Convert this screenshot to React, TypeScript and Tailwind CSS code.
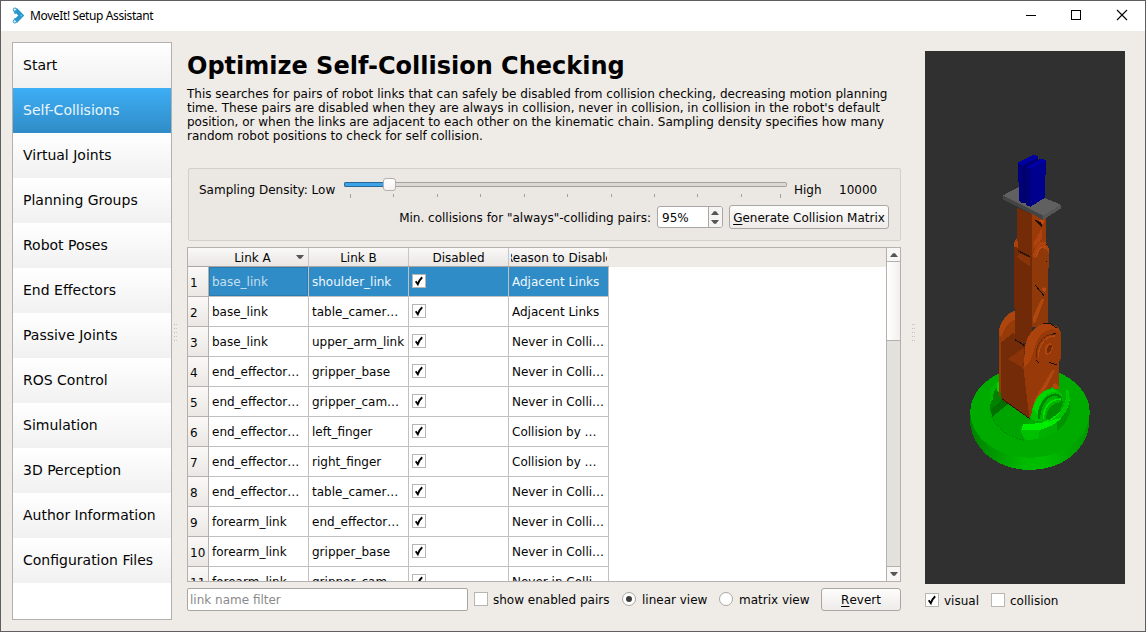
import React from "react";

const steps = [
  "Start",
  "Self-Collisions",
  "Virtual Joints",
  "Planning Groups",
  "Robot Poses",
  "End Effectors",
  "Passive Joints",
  "ROS Control",
  "Simulation",
  "3D Perception",
  "Author Information",
  "Configuration Files",
];

const pairs = [
  ["base_link", "shoulder_link", "Adjacent Links"],
  ["base_link", "table_camer…", "Adjacent Links"],
  ["base_link", "upper_arm_link", "Never in Colli…"],
  ["end_effector…", "gripper_base", "Never in Colli…"],
  ["end_effector…", "gripper_cam…", "Never in Colli…"],
  ["end_effector…", "left_finger", "Collision by …"],
  ["end_effector…", "right_finger", "Collision by …"],
  ["end_effector…", "table_camer…", "Never in Colli…"],
  ["forearm_link", "end_effector…", "Never in Colli…"],
  ["forearm_link", "gripper_base", "Never in Colli…"],
  ["forearm_link", "gripper_cam…", "Never in Colli…"],
];

const ticks = [6, 49, 93, 136, 180, 223, 267, 310, 353, 397, 436];

function Check({ on = false }: { on?: boolean }) {
  return (
    <span className="block h-[14px] w-[14px] shrink-0 border border-[#b9b5b2] bg-white">
      {on && (
        <svg width="12" height="12" viewBox="0 0 12 12" className="block">
          <path d="M2.7 6.3 L4.8 9.2 C5.8 6.4 7 4.2 9.2 2.2" fill="none" stroke="#000" strokeWidth="1.9" />
        </svg>
      )}
    </span>
  );
}

function Radio({ on = false }: { on?: boolean }) {
  return (
    <span className="mb-px flex h-[14px] w-[14px] shrink-0 items-center justify-center rounded-full border border-[#aaa7a4] bg-white">
      {on && <span className="block h-[6px] w-[6px] rounded-full bg-[#3c3c3c]" />}
    </span>
  );
}

function Arrow({ up = false }: { up?: boolean }) {
  return (
    <svg width="8" height="4" viewBox="0 0 8 4" className="block">
      <path d={up ? "M0 4 L3 0.3 H5 L8 4Z" : "M0 0 H8 L5 3.7 H3Z"} fill="#555" />
    </svg>
  );
}

function Splitter() {
  return (
    <svg width="3" height="18" viewBox="0 0 3 18" className="block shrink-0">
      {[0, 4, 8, 12, 16].map((y) => (
        <g key={y}>
          <rect x="0" y={y} width="1" height="1" fill="#bdb9b5" />
          <rect x="2" y={y} width="1" height="1" fill="#cbc7c3" />
        </g>
      ))}
    </svg>
  );
}

function Robot() {
  return (
    <svg width="200" height="533" viewBox="925 51 200 533" className="block" shapeRendering="crispEdges">
      <defs>
        <linearGradient id="rim" x1="0" x2="1" y1="0" y2="0">
          <stop offset="0" stopColor="#008200" />
          <stop offset="0.2" stopColor="#009800" />
          <stop offset="0.45" stopColor="#00ba00" />
          <stop offset="0.62" stopColor="#00be00" />
          <stop offset="1" stopColor="#009800" />
        </linearGradient>
      </defs>
      <g transform="translate(960 310) scale(0.33333)">
        <path d="M31 298 V345 C42 425 118 480 210 480 C302 480 378 425 388 345 V298Z" fill="url(#rim)" />
        <ellipse cx="210" cy="307" rx="179" ry="136" fill="#00ab00" />
        <path d="M90 298 C91 255 105 222 135 203 V262 L128 272 L95 314Z" fill="#008200" />
        <path d="M90 250 C96 230 108 214 124 206 V222 C107 230 99 244 99 266 L90 282Z" fill="#00b400" />
        <path d="M112 218 L120 216 V252 L112 241Z" fill="#00d400" />
        <path d="M92 300 L128 268 L145 284 L97 320Z" fill="#007000" />
        <path d="M97 320 L145 282 L210 328 L190 348 L183 365 L196 391 C145 378 110 352 97 320Z" fill="#00a400" />
        <path d="M95 318 C108 355 145 380 192 391" fill="none" stroke="#007b00" strokeWidth="2" strokeDasharray="8 3" />
        <path d="M183 357 L240 357 C286 347 320 315 330 270 V305 C320 350 280 378 235 387 L196 391 L183 365Z" fill="#00be00" />
        <path d="M240 357 C260 352 275 344 290 332 V366 C270 377 253 383 235 387Z" fill="#00b000" />
        <path d="M290 332 C308 318 322 298 330 270 V305 C324 330 310 350 290 366Z" fill="#009400" />
        <path d="M183 359 L191 342 L238 340 C286 328 313 300 316 270 L330 265 C324 315 287 350 240 359Z" fill="#00ed00" />
        <path d="M262 336 C292 322 312 300 316 270 L329 267 C325 292 316 309 304 323Z" fill="#00c400" />
        <path d="M317 236 L325 240 L330 268 L322 280 L317 257Z" fill="#00c600" />
      </g>
      <g transform="translate(960 140) scale(0.33333)">
        <path d="M118 590 V566 C125 538 145 522 166 514 L173 575 L160 600 H118Z" fill="#a8420b" />
        <path d="M171 203 L216 222 V352 L171 328Z" fill="#742b08" />
        <path d="M216 222 L257 235 V315 L216 350Z" fill="#9a3a09" />
        <path d="M222 238 L247 264 L244 248Z" fill="#1a1009" />
        <path d="M238 241 H252 V250 L246 252Z" fill="#c5480d" />
        <path d="M220 310 L246 265 V295 L224 325Z" fill="#b04310" />
        <path d="M162 313 L170 293 V328 L216 350 V610 H164 V505 L162 500Z" fill="#702a08" />
        <path d="M162 311 L168 296 L174 305 V323 L162 320Z" fill="#a8420e" />
        <path d="M216 350 L222 326 C232 306 251 298 260 310 L267 328 V382 L263 390 V560 H216Z" fill="#8f3809" />
        <path d="M218 350 C222 320 240 298 257 307 L267 326 V342 C250 304 231 329 229 355Z" fill="#ac430d" />
        <path d="M230 350 C232 329 243 316 255 325" fill="none" stroke="#bb4c13" strokeWidth="4" />
        <path d="M169 351 L181 341 L211 355 V380Z" fill="#893509" />
        <path d="M173 329 L211 349 V353 L177 336Z" fill="#241207" />
        <path d="M225 432 L251 464 V468 L226 438Z" fill="#140c06" />
        <path d="M244 447 L253 442 L259 448 L255 458Z" fill="#b34a10" />
        <path d="M219 530 L246 475 L253 478 L225 549 L219 547Z" fill="#b0470e" />
        <path d="M258 365 H261 M257 314 H260" stroke="#170a03" strokeWidth="3" />
      </g>
      <g transform="translate(960 310) scale(0.33333)">
        <path d="M118 76 C122 41 139 15 165 2 V87 L145 150 L118 260Z" fill="#963a08" />
        <path d="M119 52 C128 25 142 10 165 2 V28 C145 36 130 58 124 82 L119 73Z" fill="#ad450e" />
        <path d="M123 98 L160 68 L195 110 L190 174 L222 270 L209 327 L124 268Z" fill="#742b08" />
        <path d="M165 74 L195 107 V120 L165 88Z" fill="#702807" />
        <path d="M165 87 L196 106 V110 L165 91Z" fill="#1d1007" />
        <path d="M143 147 L192 113 L190 174Z" fill="#8b3409" />
        <path d="M190 173 L196 105 C205 66 239 36 271 42 C290 44 302 56 304 77 L302 145 L298 154 V235 L275 232 L240 255 L217 304 L208 326 L190 174Z" fill="#973909" />
        <path d="M124 98 L143 147 L190 174 L209 327 L124 268Z" fill="#742b08" />
        <path d="M195 112 C201 66 235 38 265 42 L285 48 L302 68 C278 47 253 61 239 79 C221 103 226 120 211 151 L192 174Z" fill="#ac430d" />
        <path d="M230 145 C224 101 254 68 285 74" fill="none" stroke="#6f2906" strokeWidth="3" />
        <path d="M236 144 C232 108 256 78 285 78" fill="none" stroke="#b24a10" strokeWidth="4" />
        <ellipse cx="266" cy="117" rx="11" ry="18" transform="rotate(23 266 117)" fill="#b0460d" />
        <ellipse cx="268" cy="116" rx="6" ry="13" transform="rotate(23 268 116)" fill="#732906" />
        <path d="M248 39 L270 41 L291 54 M276 73 L288 70 M230 151 L236 158 M267 157 L292 165" fill="none" stroke="#1b0c04" strokeWidth="3" />
        <path d="M223 270 L277 181 L285 182 L248 252 L222 282Z" fill="#b3480f" />
        <path d="M279 222 L287 220 L298 231 V238 L280 235Z" fill="#b3480f" />
        <path d="M125 266 L209 326" stroke="#271307" strokeWidth="3" />
        <path d="M214 326 C212 280 242 234 280 235 C302 239 312 259 308 279 L306 300 L266 331 L224 334Z" fill="#00c000" />
        <path d="M219 300 C223 263 249 237 280 238 L290 246 C263 241 238 271 233 312Z" fill="#00d600" />
        <path d="M233 327 C229 291 254 252 287 250 C301 252 307 260 308 276 L302 302 L264 330Z" fill="#008600" />
        <path d="M241 329 C239 293 260 258 285 257 L303 267 L302 301 L264 331Z" fill="#00b400" />
        <path d="M251 328 C248 298 267 266 303 268" fill="none" stroke="#00e400" strokeWidth="5" />
        <path d="M258 325 C258 300 276 276 306 276 L303 302 L267 330Z" fill="#008e00" />
      </g>
      <g transform="translate(960 140) scale(0.33333)">
        <path d="M129 166 L177 141 L302 194 L250 227Z" fill="#606060" />
        <path d="M129 166 L250 227 V240 L129 178Z" fill="#444" />
        <path d="M250 227 L302 194 V206 L250 239Z" fill="#565656" />
        <path d="M174 70 L220 45 L234 48 V59 L249 56 L258 61 V103 L255 105 V173 L212 200 L199 196 V186 L188 190 L178 184 V130 L174 124Z" fill="#00007a" />
        <path d="M214 84 L258 61 V103 L255 105 V173 L212 200Z" fill="#00008f" />
        <path d="M174 67 L218 45 L234 48 V56 L188 79Z" fill="#0000a2" />
        <path d="M198 81 L245 56 L258 61 L214 86Z" fill="#0000a6" />
        <path d="M188 78 L234 54 V61 L198 79 V188 L188 188Z" fill="#000069" />
      </g>
    </svg>
  );
}

export default function App() {
  return (
    <div className="flex h-[632px] w-[1146px] flex-col overflow-hidden border border-[#5e5d61] bg-[#efebe7] font-['DejaVu_Sans','Liberation_Sans',sans-serif] text-[12px] leading-[14px] text-[#050505]">
      <header className="flex h-[30px] shrink-0 items-center bg-white pl-[11px]">
        <svg width="13" height="17" viewBox="0 0 13 17" className="mb-[2px] block">
          <path d="M3.4 2.5 L9.2 8.5 L3.4 14.5" fill="none" stroke="#2a97ca" strokeWidth="4.4" />
          <path d="M2 3 L3.4 7 M2 14 L3.4 11" stroke="#2a97ca" strokeWidth="1.5" />
          <circle cx="2.8" cy="2.6" r="1.6" fill="#e9f7fd" stroke="#2a97ca" />
          <circle cx="2.8" cy="14.4" r="1.6" fill="#e9f7fd" stroke="#2a97ca" />
          <circle cx="9.3" cy="8.5" r="1" fill="#61b9de" />
        </svg>
        <h1 className="ml-[5px] grow font-['Noto_Sans','Open_Sans',sans-serif] text-[12px] font-normal tracking-[-0.38px] text-black">
          MoveIt! Setup Assistant
        </h1>
        <svg width="120" height="30" viewBox="0 0 120 30" fill="none" stroke="#000" className="block">
          <path d="M1 14.5 H11" />
          <rect x="46.5" y="9.5" width="9" height="9" />
          <path d="M92 9 L102 19 M102 9 L92 19" strokeWidth="1.1" />
        </svg>
      </header>

      <div className="flex min-h-0 grow">
        <nav className="mt-[11px] ml-[11px] h-[578px] w-[160px] shrink-0 border border-[#b4b0ad] bg-white text-[14px]">
          {steps.map((s, i) => (
            <div
              key={s}
              className={
                i === 1
                  ? "flex h-[45px] items-center bg-linear-to-b from-[#3daef6] to-[#308cc6] pb-[2px] pl-[10px] text-[#eaf7ff]"
                  : "flex h-[45px] items-center bg-linear-to-b from-white to-[#f1f1f1] pb-[2px] pl-[10px]"
              }
            >
              {s}
            </div>
          ))}
        </nav>

        <div className="flex w-[15px] shrink-0 pt-[293px] pl-[2px]">
          <Splitter />
        </div>

        <main className="flex w-[714px] shrink-0 flex-col">
          <h2 className="mt-[21px] h-[28px] text-[24px] leading-[28px] font-bold whitespace-nowrap text-black">
            Optimize Self-Collision Checking
          </h2>
          <p className="mt-[7px] h-[56px] whitespace-nowrap">
            This searches for pairs of robot links that can safely be disabled from collision checking, decreasing motion planning
            <br />
            time. These pairs are disabled when they are always in collision, never in collision, in collision in the robot's default
            <br />
            position, or when the links are adjacent to each other on the kinematic chain. Sampling density specifies how many
            <br />
            random robot positions to check for self collision.
          </p>

          <section className="mt-[25px] ml-px flex h-[73px] shrink-0 flex-col rounded-[2px] border border-[#d3cfcc] bg-[#ebe7e3]">
            <div className="flex h-[36px] pl-[10px]">
              <span className="w-[145px] pt-[14px]">Sampling Density: Low</span>
              <div className="w-[443px] pt-[8px]">
                <div className="flex h-[15px] items-center">
                  <div className="h-[5px] w-[39px] rounded-l-[2px] border border-r-0 border-[#24699a] bg-[#3ba3e6]" />
                  <div className="h-[13px] w-[13px] rounded-[3px] border border-[#b4b0ad] bg-linear-to-b from-white to-[#f4f2f1]" />
                  <div className="h-[5px] grow rounded-r-[2px] border border-l-0 border-[#a5a19e] bg-[#dcd8d5]" />
                </div>
                <svg width="443" height="6" viewBox="0 0 443 6" className="mt-[1px] block">
                  {ticks.map((x, i) => (
                    <rect key={x} x={x} y="1" width="1" height={i === 0 || i === 10 ? 4 : 3} fill="#a3a09d" />
                  ))}
                </svg>
              </div>
              <span className="ml-[7px] w-[45px] pt-[14px]">High</span>
              <span className="pt-[14px]">10000</span>
            </div>
            <div className="flex h-[24px] items-center justify-end pr-[11px]">
              <span className="mr-[6px] pt-[2px]">Min. collisions for "always"-colliding pairs:</span>
              <div className="mr-[6px] flex h-[22px] w-[66px] rounded-[3px] border border-[#aaa6a3] bg-white">
                <span className="flex grow items-center pt-[2px] pl-[4px]">95%</span>
                <div className="flex w-[14px] flex-col items-center justify-center gap-[5px] rounded-r-[2px] border-l border-[#aaa6a3] bg-[#f6f4f3] pr-px">
                  <Arrow up />
                  <Arrow />
                </div>
              </div>
              <button className="flex h-[24px] w-[160px] items-center justify-center rounded-[3px] border border-[#aaa6a3] bg-linear-to-b from-[#fdfdfc] to-[#eeebe9] pt-[2px]">
                <span className="underline underline-offset-2">G</span>enerate Collision Matrix
              </button>
            </div>
          </section>

          <section className="mt-[6px] flex h-[335px] shrink-0 overflow-hidden border border-[#b4b0ad] bg-white">
            <div className="flex min-w-0 grow flex-col">
              <div className="flex h-[19px] shrink-0 bg-[#eeeae6]">
                <div className="flex w-[421px] border-b border-[#a9a5a2] bg-linear-to-b from-[#faf9f8] to-[#e9e6e3]">
                  <div className="w-[21px]" />
                  <div className="flex w-[100px] items-center border-r border-[#c9c5c2]">
                    <span className="grow pt-px text-center">Link A</span>
                    <span className="mr-[4px]"><Arrow /></span>
                  </div>
                  <div className="flex w-[100px] items-center justify-center border-r border-[#c9c5c2] pt-px">Link B</div>
                  <div className="flex w-[100px] items-center justify-center border-r border-[#c9c5c2] pt-px">Disabled</div>
                  <div className="flex w-[100px] items-center px-[2px] pt-px">
                    <span className="flex grow justify-center overflow-hidden whitespace-nowrap">
                      <span className="shrink-0">Reason to Disable</span>
                    </span>
                  </div>
                </div>
              </div>
              {pairs.map(([a, b, reason], i) => {
                const cell =
                  i === 0
                    ? "flex w-[100px] items-center border-r border-b border-[#c3bfbc] bg-[#308cc6] pl-[3px] text-[#edf8ff]"
                    : "flex w-[100px] items-center border-r border-b border-[#c3bfbc] pl-[3px]";
                return (
                  <div key={i} className="flex h-[30px] shrink-0 whitespace-nowrap">
                    <div className="flex w-[21px] items-center border-r border-b border-[#b4b0ad] bg-linear-to-b from-[#fbf9f7] to-[#eae7e4] pt-[3px] pl-[2px]">
                      {i + 1}
                    </div>
                    <div className={i === 0 ? cell + " shadow-[inset_0_0_0_1px_#287cb1]" : cell}>
                      <span className={i === 0 ? "text-[#c4dfef]" : ""}>{a}</span>
                    </div>
                    <div className={cell}>{b}</div>
                    <div className={cell + " pb-[2px]"}>
                      <Check on />
                    </div>
                    <div className={cell}>{reason}</div>
                  </div>
                );
              })}
            </div>
            <div className="flex w-[14px] shrink-0 flex-col border-l border-[#b4b0ad] bg-[#e3e1de]">
              <div className="flex h-[14px] items-center justify-center border-b border-[#b4b0ad] bg-[#f8f6f5]">
                <Arrow up />
              </div>
              <div className="h-[79px] border-b border-[#b4b0ad] bg-linear-to-r from-white to-[#f2f0ee]" />
              <div className="grow" />
              <div className="flex h-[15px] items-center justify-center border-t border-[#b4b0ad] bg-[#f8f6f5]">
                <Arrow />
              </div>
            </div>
          </section>

          <div className="mt-[6px] flex h-[23px] shrink-0 items-center whitespace-nowrap">
            <div className="flex h-[23px] w-[281px] items-center rounded-[2px] border border-[#aaa6a3] bg-white pt-px pl-[2px] text-[#8a8a8a]">
              link name filter
            </div>
            <div className="ml-[6px] flex w-[148px] items-center gap-[5px]">
              <span className="mb-px"><Check /></span>
              show enabled pairs
            </div>
            <div className="flex w-[97px] items-center gap-[6px]">
              <Radio on />
              linear view
            </div>
            <div className="flex w-[102px] items-center gap-[6px]">
              <Radio />
              matrix view
            </div>
            <button className="flex h-[23px] w-[80px] items-center justify-center rounded-[3px] border border-[#aaa6a3] bg-linear-to-b from-[#fdfdfc] to-[#eeebe9]">
              <span className="underline underline-offset-2">R</span>evert
            </button>
          </div>
        </main>

        <div className="flex w-[24px] shrink-0 justify-center pt-[293px]">
          <Splitter />
        </div>

        <aside className="flex w-[200px] shrink-0 flex-col pt-[20px]">
          <div className="h-[533px] bg-[#303030]">
            <Robot />
          </div>
          <div className="mt-[9px] flex">
            <div className="flex w-[66px] items-start gap-[5px]">
              <Check on />
              <span className="pt-px">visual</span>
            </div>
            <div className="flex items-start gap-[5px]">
              <Check />
              <span className="pt-px">collision</span>
            </div>
          </div>
        </aside>
      </div>
    </div>
  );
}
